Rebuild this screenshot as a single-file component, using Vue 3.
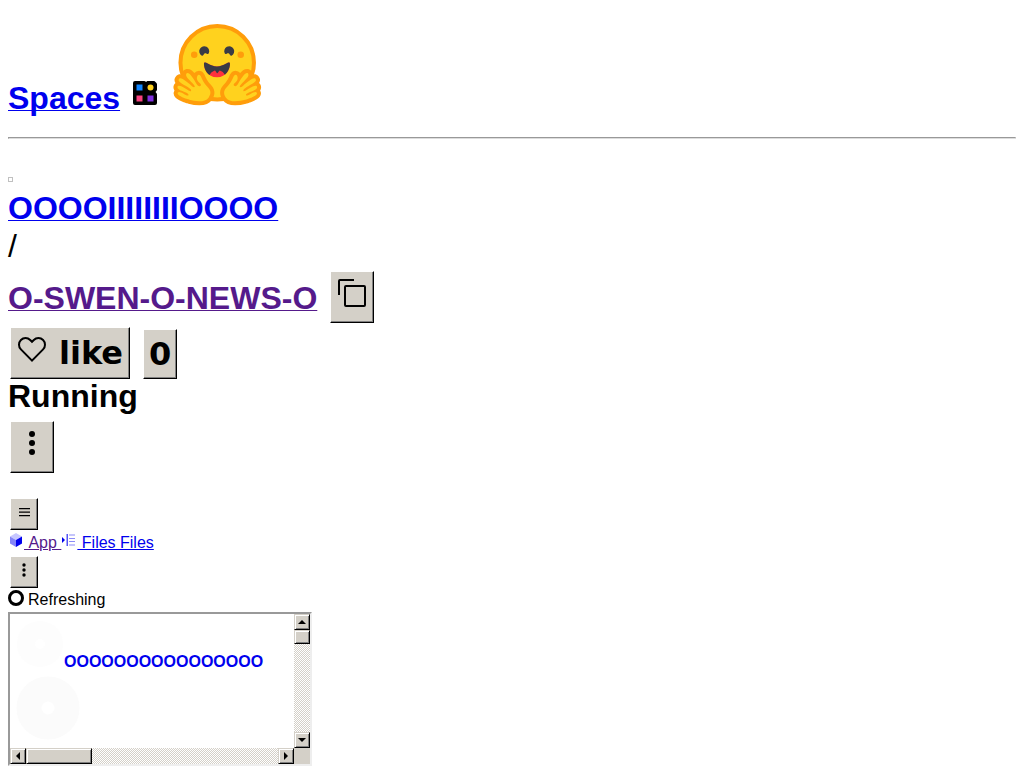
<script setup>
import { ref } from 'vue'

const likes = ref(0)
const liked = ref(false)
const owner = 'OOOOIIIIIIIIOOOO'
const space = 'O-SWEN-O-NEWS-O'
const embedTitle = 'O'.repeat(16)

const toggleLike = () => {
  liked.value = !liked.value
  likes.value += liked.value ? 1 : -1
}

const copyName = () => {
  navigator.clipboard?.writeText(`${owner}/${space}`)
}
</script>

<template>
  <div class="page">
    <header class="top">
      <a href="#spaces" class="big-link">Spaces</a>
      <svg class="grid-icon" viewBox="0 0 24 24" width="24" height="24">
        <path d="M2 0h9q1.500 0 2 1a6.700 6.700 0 1 1 9.500 10q1.500 1 1.500 2.500v8.500q0 2-2 2H2q-2 0-2-2V2q0-2 2-2z" />
        <path fill="#0d84ff" d="M3.500 3.500h6v6h-6z" />
        <circle cx="17.500" cy="6.500" r="3" fill="#ffd21e" />
        <path fill="#f9407e" d="M3.500 14.500h6v6h-6z" />
        <path fill="#802fe0" d="M14.500 14.500h6v6h-6z" />
      </svg>
      <svg class="face" viewBox="0 0 95 88" width="95" height="88">
        <circle cx="47.21" cy="41.75" r="36.75" fill="#FFD21E" stroke="#FF9D0B" stroke-width="4" />
        <path fill="#3A3B45" d="M58.5 32.3c1.28.44 1.78 3.06 3.07 2.38a5 5 0 1 0-6.76-2.07c.61 1.15 2.55-.72 3.7-.32ZM34.95 32.3c-1.28.44-1.79 3.06-3.07 2.38a5 5 0 1 1 6.76-2.07c-.61 1.15-2.56-.72-3.7-.32Z" />
        <path fill="#FF323D" d="M46.96 56.29c9.83 0 13-8.76 13-13.26 0-2.34-1.57-1.6-4.09-.36-2.33 1.15-5.46 2.74-8.9 2.74-7.19 0-13-6.88-13-2.38s3.16 13.26 13 13.26Z" />
        <path fill="#3A3B45" d="M39.43 54a8.7 8.7 0 0 1 5.3-4.49c.4-.12.81.57 1.24 1.28.4.68.82 1.37 1.24 1.37.45 0 .9-.68 1.33-1.35.45-.7.89-1.38 1.32-1.25a8.61 8.61 0 0 1 5 4.17c3.73-2.94 5.1-7.74 5.1-10.7 0-2.34-1.57-1.6-4.09-.36l-.14.07c-2.31 1.15-5.39 2.67-8.77 2.67s-6.45-1.52-8.77-2.67c-2.6-1.29-4.23-2.1-4.23.29 0 3.05 1.46 8.06 5.47 10.97Z" />
        <circle cx="70.71" cy="33.75" r="3.25" fill="#FF9D0B" />
        <circle cx="24.21" cy="33.75" r="3.25" fill="#FF9D0B" />
        <g id="hand">
          <path fill="#FF9D0B" d="M17.52 48c-1.62 0-3.06.66-4.07 1.87a5.97 5.97 0 0 0-1.33 3.76 7.1 7.1 0 0 0-1.94-.3c-1.55 0-2.95.59-3.94 1.66a5.8 5.8 0 0 0-.8 7 5.3 5.3 0 0 0-1.79 2.82c-.24.9-.48 2.8.8 4.74a5.22 5.22 0 0 0-.37 5.02c1.02 2.32 3.57 4.14 8.52 6.1 3.07 1.22 5.89 2 5.91 2.01a44.33 44.33 0 0 0 10.93 1.6c5.86 0 10.05-1.8 12.46-5.34 3.88-5.69 3.33-10.9-1.7-15.92-2.77-2.78-4.62-6.87-5-7.77-.78-2.66-2.84-5.62-6.25-5.62a5.7 5.7 0 0 0-4.6 2.46c-1-1.26-1.98-2.25-2.86-2.82A7.4 7.4 0 0 0 17.52 48Z" />
          <path fill="#FFD21E" d="M38.6 76.69c2.75-4.04 2.55-7.07-1.22-10.84-3.78-3.77-5.98-9.3-5.98-9.3s-.82-3.2-2.69-2.9c-1.87.3-3.24 5.08.68 8.01 3.91 2.93-.78 4.92-2.29 2.17-1.5-2.75-5.62-9.82-7.76-11.18-2.13-1.35-3.63-.6-3.13 2.2.5 2.79 9.43 9.55 8.56 11-.87 1.47-3.93-1.71-3.93-1.71s-9.57-8.71-11.66-6.44c-2.08 2.27 1.59 4.17 6.8 7.33 5.23 3.16 5.64 4 4.9 5.2-.75 1.2-12.28-8.53-13.36-4.4-1.08 4.11 11.77 5.3 10.98 8.15-.8 2.85-9.06-5.38-10.74-2.18-1.7 3.21 11.65 6.98 11.76 7.01 4.3 1.12 15.25 3.49 19.08-2.12Z" />
        </g>
        <use href="#hand" transform="translate(94.550 0) scale(-1 1)" />
      </svg>
    </header>
    <hr>

    <main>
      <div class="avatar"></div>
      <div class="owner"><a href="#owner" class="big-link">{{ owner }}</a></div>
      <div class="slash">/</div>
      <div class="title-row">
        <a href="#space" class="big-link visited">{{ space }}</a>
        <button class="btn" aria-label="Copy space name" @click="copyName">
          <svg viewBox="0 0 32 32" width="32" height="32">
            <path d="M28 10v18H10V10h18m0-2H10a2 2 0 0 0-2 2v18a2 2 0 0 0 2 2h18a2 2 0 0 0 2-2V10a2 2 0 0 0-2-2Z" />
            <path d="M4 18H2V4a2 2 0 0 1 2-2h14v2H4Z" />
          </svg>
        </button>
      </div>
      <div class="like-row">
        <button class="btn like" @click="toggleLike">
          <svg viewBox="0 0 32 32" width="32" height="32">
            <path d="M22.45 6a5.47 5.47 0 0 1 3.91 1.64 5.7 5.7 0 0 1 0 8L16 26.130 5.640 15.640a5.7 5.7 0 0 1 0-8 5.480 5.480 0 0 1 7.820 0l2.540 2.600 2.530-2.580A5.440 5.440 0 0 1 22.450 6m0-2a7.470 7.470 0 0 0-5.340 2.240L16 7.360l-1.110-1.120a7.490 7.490 0 0 0-10.680 0 7.720 7.720 0 0 0 0 10.820L16 29l11.790-11.940a7.720 7.720 0 0 0 0-10.820A7.490 7.490 0 0 0 22.450 4Z" />
          </svg>
          <span>like</span>
        </button>
        <button class="btn count" aria-label="See users who liked this">{{ likes }}</button>
      </div>
      <div class="status">Running</div>
      <button class="btn" aria-label="More options">
        <svg viewBox="0 0 32 32" width="32" height="32">
          <circle cx="16" cy="7" r="3" />
          <circle cx="16" cy="16" r="3" />
          <circle cx="16" cy="25" r="3" />
        </svg>
      </button>

      <button class="btn small menu" aria-label="Menu">
        <svg viewBox="0 0 16 16" width="16" height="16">
          <path d="M3 4h11v1.300H3zM3 7.500h11v1.300H3zM3 11h11v1.300H3z" />
        </svg>
      </button>
      <nav class="tabs">
        <a href="#app-tab" class="visited">
          <svg viewBox="0 0 16 16" width="16" height="16">
            <path fill="#c6c6ff" d="M8 1l6 3.500-6 3.500-6-3.500z" />
            <path fill="#8484f8" d="M2 4.500L8 8v7l-6-3.500z" />
            <path fill="#0000ee" d="M14 4.500L8 8v7l6-3.500z" />
          </svg>&nbsp;App&nbsp;</a>
        <a href="#files">
          <svg viewBox="0 0 16 16" width="16" height="16">
            <path fill="#0000ee" d="M1 5l3 3-3 3z" />
            <path fill="#5555f4" d="M5.500 2H7v12H5.500z" />
            <path fill="#8c8cf8" d="M8 2.500h6v1H8zM8 6h6v1H8zM8 9h6v1H8zM8 12.500h6v1H8z" />
          </svg>&nbsp;Files Files</a>
      </nav>
      <button class="btn small" aria-label="More tabs">
        <svg viewBox="0 0 16 16" width="16" height="16">
          <circle cx="8" cy="3" r="1.700" />
          <circle cx="8" cy="8" r="1.700" />
          <circle cx="8" cy="13" r="1.700" />
        </svg>
      </button>
      <div class="refresh">
        <svg viewBox="0 0 16 16" width="16" height="16">
          <circle cx="8" cy="8" r="6.500" fill="none" stroke="#000" stroke-width="3" />
        </svg>
        <span>Refreshing</span>
      </div>

      <section class="frame">
        <div class="view">
          <svg class="rings" viewBox="0 0 80 134" width="80" height="134">
            <circle cx="30" cy="30" r="14" fill="none" stroke="#fdfdfd" stroke-width="18" />
            <circle cx="38" cy="94" r="19" fill="none" stroke="#fbfbfb" stroke-width="25" />
          </svg>
          <a href="#embed">{{ embedTitle }}</a>
        </div>
        <div class="bar vertical">
          <button class="arrow" aria-label="Scroll up"><svg viewBox="0 0 8 8" width="8" height="8"><path d="M4 2l4 4H0z" /></svg></button>
          <div class="thumb"></div>
          <button class="arrow end" aria-label="Scroll down"><svg viewBox="0 0 8 8" width="8" height="8"><path d="M0 2h8L4 6z" /></svg></button>
        </div>
        <div class="bar">
          <button class="arrow" aria-label="Scroll left"><svg viewBox="0 0 8 8" width="8" height="8"><path d="M6 0v8L2 4z" /></svg></button>
          <div class="thumb"></div>
          <button class="arrow end" aria-label="Scroll right"><svg viewBox="0 0 8 8" width="8" height="8"><path d="M2 0l4 4-4 4z" /></svg></button>
        </div>
        <div class="corner"></div>
      </section>
    </main>
  </div>
</template>

<style>
body {
  background: #fff;
}
</style>

<style scoped>
.page {
  padding: 8px 8px 14px;
  font-family: "Liberation Sans", Arial, sans-serif;
  font-size: 16px;
  line-height: 18px;
  color: #000;
}

svg {
  display: block;
  flex: none;
}

a {
  color: #0000ee;
  text-decoration-thickness: 1px;
}

a.visited {
  color: #551a8b;
}

.big-link,
.slash,
.status {
  font-size: 32px;
  line-height: 36px;
}

.big-link,
.status {
  font-weight: bold;
}

.big-link {
  text-underline-offset: 1px;
  text-decoration-skip-ink: none;
}

.top {
  display: flex;
  align-items: flex-end;
  padding-top: 13px;
}

.grid-icon {
  margin: 0 13px 11px;
}

.face {
  margin-bottom: 7px;
}

hr {
  margin: 21px 0 38px;
  border: 1px solid;
  border-color: #999 #ddd #ddd #999;
}

main {
  display: flex;
  flex-direction: column;
  align-items: flex-start;
}

.avatar {
  width: 3px;
  height: 3px;
  margin-bottom: 8px;
  border: 1px solid #c0c0c0;
}

.slash {
  margin: 2px 0 7px;
}

.title-row {
  display: flex;
  align-items: center;
  gap: 13px;
}

.title-row a {
  padding-top: 2px;
}

.btn {
  margin: 0 2px;
  padding: 5px 5px 13px;
  background: #d4d0c8;
  border: 1px solid;
  border-color: #fff #000 #000 #fff;
  box-shadow: inset -1px -1px #808080;
  color: #000;
}

.title-row .btn {
  margin: 0;
}

.like-row {
  display: flex;
  align-items: flex-end;
  gap: 9px;
  margin-top: 4px;
}

.like,
.count {
  font: bold 32px/38px "DejaVu Sans", sans-serif;
}

.like {
  display: flex;
  gap: 11px;
  height: 52px;
  padding: 5px 6px 5px 5px;
}

.like span {
  padding-top: 1px;
}

.count {
  padding: 5px;
}

.status {
  margin: -1px 0 7px;
}

.btn.small {
  padding: 5px 5px 9px;
}

.menu {
  margin-top: 25px;
}

.tabs {
  display: flex;
  margin: 2px 0 4px;
}

.tabs svg {
  display: inline-block;
  vertical-align: 0;
}

.refresh {
  display: flex;
  gap: 4px;
  margin: 2px 0 3px;
  line-height: 19px;
}

.frame {
  display: grid;
  grid-template-columns: 284px 16px;
  grid-template-rows: 134px 16px;
  border: 2px solid;
  border-color: #999 #eee #eee #999;
}

.view {
  position: relative;
  padding: 39px 0 0 54px;
  font-weight: bold;
}

.view a {
  position: relative;
  text-decoration: none;
}

.rings {
  position: absolute;
  top: 0;
  left: 0;
}

.bar {
  display: flex;
  background: repeating-conic-gradient(#d4d0c8 0 25%, #fff 0 50%) 0 0 / 2px 2px;
}

.vertical {
  flex-direction: column;
}

.arrow,
.thumb {
  box-sizing: border-box;
  width: 16px;
  height: 16px;
  padding: 0;
  background: #d4d0c8;
  border: 1px solid;
  border-color: #d4d0c8 #000 #000 #d4d0c8;
  box-shadow: inset 1px 1px #fff, inset -1px -1px #808080;
}

.arrow {
  display: grid;
  place-items: center;
}

.end {
  margin-left: auto;
}

.thumb {
  width: 66px;
}

.vertical .thumb {
  width: 16px;
  height: 14px;
}

.vertical .end {
  margin: auto 0 0;
}

.corner {
  background: #d4d0c8;
}
</style>
